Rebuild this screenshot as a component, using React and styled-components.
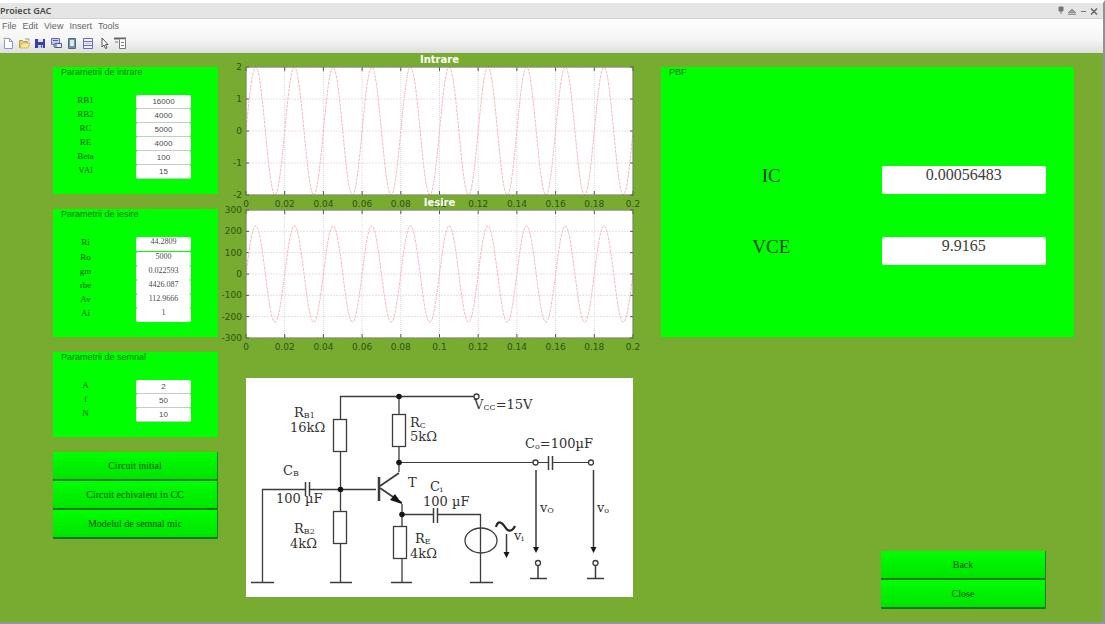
import React, { useId, useState } from "react";
import styled, { createGlobalStyle } from "styled-components";

const SANS = '"Liberation Sans", Arial, sans-serif';
const SERIF = '"Liberation Serif", "Times New Roman", serif';
const DEJAVU = '"DejaVu Sans", Verdana, sans-serif';

const GlobalStyle = createGlobalStyle`
  *, *::before, *::after { box-sizing: border-box; }
  body { margin: 0; background: #ffffff; font-family: ${SANS}; }
  h1, h2, figure { margin: 0; }
`;

/* ---------- window frame ---------- */

const Window = styled.div`
  display: flex;
  flex-direction: column;
  min-height: 100vh;
  border-top: 3px solid #ffffff;
  border-right: 2px solid #90929a;
  border-bottom: 2px solid #94989a;
  background: #77ac30;
`;

const TitleBar = styled.header`
  display: flex;
  align-items: center;
  justify-content: space-between;
  height: 16px;
  padding-right: 4px;
  background: #e5e5e5;
  border-bottom: 1px solid #d2d2d2;
`;

const WindowTitle = styled.h1`
  font: 600 9px/14px "Noto Sans", sans-serif;
  color: #4a4a4a;
`;

const WindowControls = styled.div`
  display: flex;
  align-items: center;
  gap: 1px;
`;

const PlainButton = styled.button`
  display: flex;
  padding: 0;
  border: 0;
  background: none;
  color: #6a6a6a;
`;

const Chrome = styled.div`
  background: linear-gradient(#fdfdfd, #f5f5f5 60%, #dedede);
  height: 34px;
`;

const MenuBar = styled.nav`
  display: flex;
  gap: 6px;
  padding: 0 2px;
  height: 15px;
`;

const MenuItem = styled(PlainButton)`
  font: 9px/14px ${SANS};
  color: #666666;
`;

const Toolbar = styled.div`
  display: flex;
  align-items: center;
  gap: 4px;
  height: 18px;
  padding: 0 2px;
`;

/* ---------- content ---------- */

const Workspace = styled.main`
  flex: 1;
  display: grid;
  grid-template-columns: 165px 387fr 413fr;
  column-gap: 28px;
  padding: 0 29px 13px 53px;
`;

const Column = styled.div`
  display: flex;
  flex-direction: column;
  gap: 15px;
  padding-top: 14px;
`;

const PlotColumn = styled.div`
  display: flex;
  flex-direction: column;
  gap: 1px;
`;

const Panel = styled.section`
  background: #00ff00;
  padding-bottom: ${(p) => (p.$large ? "72px" : "15px")};
`;

const PanelTitle = styled.h2`
  padding-left: 8px;
  margin-bottom: ${(p) => (p.$large ? "89px" : "18px")};
  font: 9px/10px ${SANS};
  color: #0b780b;
`;

const FieldRows = styled.div`
  display: grid;
  grid-template-columns: 1fr 1fr;
  column-gap: 23px;
  padding: 0 27px 0 5px;
`;

const FieldLabel = styled.label`
  height: 14px;
  font: 9px/10px ${SERIF};
  text-align: center;
  color: #045c04;
`;

const FieldInput = styled.input`
  width: 100%;
  min-width: 0;
  height: 14px;
  padding: 0;
  border: 0;
  border-bottom: 1px solid #c4ccc4;
  border-radius: 2px;
  background: #ffffff;
  font: 8px/13px ${SANS};
  text-align: center;
  color: #4c4c4c;
`;

const FieldOutput = styled.output`
  height: 14px;
  border-radius: 2px;
  background: #ffffff;
  font: 8px/10px ${SERIF};
  text-align: center;
  color: #4c4c4c;

  &:first-of-type {
    height: 15px;
    border-bottom: 1px solid #00ff00;
  }
`;

const ResultRows = styled.div`
  display: grid;
  grid-template-columns: 1fr 1fr;
  gap: 43px 28px;
  padding: 0 28px;
`;

const ResultLabel = styled.label`
  font: 19px/19px ${SERIF};
  text-align: center;
  color: #064806;
`;

const ResultOutput = styled.output`
  height: 28px;
  border-radius: 2px;
  background: #ffffff;
  font: 16px/18px ${SERIF};
  text-align: center;
  color: #3c3c3c;
`;

const ButtonStack = styled.div`
  display: flex;
  flex-direction: column;
  margin: ${(p) => (p.$right ? "auto 28px 0 auto" : "0")};
  width: 165px;
`;

const PushButton = styled.button`
  height: 29px;
  padding: 0;
  border: 0;
  border-right: 1px solid #0b8a0b;
  border-bottom: 2px solid #0b7a0b;
  border-radius: 1px;
  background: linear-gradient(#00ff00, #00e400);
  font: 10px/14px ${SERIF};
  color: #045004;
`;

/* ---------- plots ---------- */

const Figure = styled.figure`
  display: flex;
  flex-direction: column;
`;

const PlotTitle = styled.figcaption`
  position: relative;
  z-index: 1;
  text-align: center;
  font: bold 10px/14px ${DEJAVU};
  color: #ffffff;
`;

const PlotSvg = styled.svg`
  display: block;
  width: 100%;
  height: auto;
  overflow: visible;
  font: 9px ${DEJAVU};
`;

const Schematic = styled.svg`
  display: block;
  width: 100%;
  height: auto;
  margin-top: 39px;
  background: #ffffff;
  font: 13px "DejaVu Serif", serif;
`;

const W = 387;
const H = 128;
const X_TICKS = ["0", "0.02", "0.04", "0.06", "0.08", "0.1", "0.12", "0.14", "0.16", "0.18", "0.2"];

function sinePath(amplitude, limit) {
  const points = [];
  for (let x = 0; x <= W; x += 1) {
    const y = H / 2 - (amplitude / limit) * (H / 2) * Math.sin((2 * Math.PI * 10 * x) / W);
    points.push(`${x} ${y.toFixed(2)}`);
  }
  return "M" + points.join("L");
}

function Plot({ title, yTicks, amplitude, limit }) {
  return (
    <Figure>
      <PlotTitle>{title}</PlotTitle>
      <PlotSvg viewBox={`0 0 ${W} ${H}`} role="img" aria-label={title}>
        <rect width={W} height={H} fill="#fff" />
        {X_TICKS.map((t, i) => {
          const x = (W * i) / 10;
          return (
            <g key={t}>
              <path d={`M${x} 0V${H}`} stroke="#dcd2e0" strokeDasharray="1 1" />
              <path d={`M${x} 0v4M${x} ${H}v-4`} stroke="#555" />
              <text x={x} y={H + 12} textAnchor="middle" fill="#2f5210">{t}</text>
            </g>
          );
        })}
        {yTicks.map((t, i) => {
          const y = (H * i) / (yTicks.length - 1);
          return (
            <g key={t}>
              <path d={`M0 ${y}H${W}`} stroke="#ecdce2" strokeDasharray="2 1" />
              <path d={`M0 ${y}h3M${W} ${y}h-3`} stroke="#555" />
              <text x={-4} y={y + 3} textAnchor="end" fill="#2f5210">{t}</text>
            </g>
          );
        })}
        <path d={sinePath(amplitude, limit)} fill="none" stroke="#f6b8c0" strokeDasharray="3 1" />
        <rect width={W} height={H} fill="none" stroke="#5d7a3c" />
      </PlotSvg>
    </Figure>
  );
}

/* ---------- circuit drawing ---------- */

function Sub({ x, y, base, sub, rest = "" }) {
  return (
    <text x={x} y={y}>
      {base}
      <tspan fontSize="8" dy="1">{sub}</tspan>
      {rest && <tspan dy="-1">{rest}</tspan>}
    </text>
  );
}

function Circuit() {
  return (
    <Schematic viewBox="0 0 387 219" role="img" aria-label="Schema circuitului">
      <g fill="none" stroke="#3c3c3c" strokeWidth="1.3">
        <path d="M94.5 41V18.5H228" />
        <path d="M94.5 74V133M94.5 166V204M153 18.5V36M153 68V94" />
        <path d="M16.5 204V111.500H59M64 111.500H130" />
        <path d="M153 84.500H287M292 84.500H302M306 84.500H342" strokeWidth="1" />
        <path d="M156 126V148M156 180V204M156 136.500H187M192 136.500H234.500V204" />
        <path d="M5 204.500H28M84 204.500H106M145 204.500H166M224 204.500H247M284 200.500H301M341 200.500H358" />
        <rect x="87.500" y="41.500" width="13" height="32" />
        <rect x="87.500" y="133.500" width="13" height="32" />
        <rect x="146.500" y="36.500" width="13" height="32" />
        <rect x="147.500" y="148.500" width="13" height="32" />
        <path d="M59.500 104V118M63.500 104V118M187.500 130V145M191.500 130V145M302.500 78V92M306.500 78V92" strokeWidth="1.500" />
        <path d="M133 99V123" strokeWidth="2.500" />
        <path d="M134 108L153 95M134 110L156 125" strokeWidth="1.800" />
        <ellipse cx="235" cy="162.500" rx="16" ry="12.500" />
        <path d="M250 149C252 142 256 144 259 149S266 154 269 148" strokeWidth="2.200" stroke="#222" />
        <path d="M260.500 156V176M290 92V170M347.500 92V170M292 188V200M349.500 188V200" strokeWidth="1.500" />
        <circle cx="230.500" cy="18.500" r="2.500" />
        <circle cx="289.500" cy="84.500" r="2.500" />
        <circle cx="345" cy="84.500" r="2.500" />
        <circle cx="292" cy="185" r="2.500" />
        <circle cx="349.500" cy="185" r="2.500" />
      </g>
      <g fill="#161616">
        <circle cx="153" cy="18.500" r="2.800" />
        <circle cx="94.500" cy="111.500" r="2.800" />
        <circle cx="153" cy="84.500" r="2.800" />
        <circle cx="156" cy="136.500" r="2.800" />
        <path d="M156 126L144 122L149 116Z" />
        <path d="M257.500 174h6l-3 6zM287 169h6l-3 6zM344.500 169h6l-3 6z" />
      </g>
      <g fill="#333">
        <Sub x="48" y="39" base="R" sub="B1" />
        <text x="44" y="54">16kΩ</text>
        <Sub x="164" y="49" base="R" sub="C" />
        <text x="164" y="63">5kΩ</text>
        <Sub x="228" y="31" base="V" sub="CC" rest="=15V" />
        <Sub x="279" y="70" base="C" sub="o" rest="=100µF" />
        <Sub x="37" y="97" base="C" sub="B" />
        <text x="30" y="125">100 µF</text>
        <text x="162" y="109">T</text>
        <Sub x="184" y="113" base="C" sub="i" />
        <text x="177" y="128">100 µF</text>
        <Sub x="48" y="155" base="R" sub="B2" />
        <text x="44" y="170">4kΩ</text>
        <Sub x="169" y="165" base="R" sub="E" />
        <text x="164" y="180">4kΩ</text>
        <Sub x="268" y="162" base="v" sub="i" />
        <Sub x="294" y="134" base="v" sub="O" />
        <Sub x="351" y="134" base="v" sub="o" />
      </g>
    </Schematic>
  );
}

/* ---------- icons ---------- */

const TOOL_ICONS = [
  ["New", <><path d="M2.500 1.500h5l3 3v7h-8z" fill="#fff" stroke="#8c94cc" /><path d="M7.500 1.500v3h3" fill="none" stroke="#8c94cc" /><path d="M1 1l2 2M3 0v2" stroke="#e0c050" /></>],
  ["Open", <><path d="M1.500 10.500v-7h3l1 1h4v6z" fill="#e8d070" stroke="#b89c40" /><path d="M2 11l2-5h8l-2 5z" fill="#f6e89a" stroke="#c0a850" strokeWidth=".7" /><path d="M7 2h4v2" fill="none" stroke="#999" /></>],
  ["Save", <><path d="M1 2h10v9H1z" fill="#3840a0" /><path d="M4 2h5v3H4z" fill="#dfe3fa" /><path d="M4 8h5v3H4z" fill="#c6ccee" /><path d="M7 8.500h1v2H7z" fill="#3840a0" /></>],
  ["Print", <><path d="M1.500 1.500h8v6h-8z" fill="#c4cce8" stroke="#6870a8" /><path d="M3 3.500h5" stroke="#5860a0" /><path d="M4.500 6.500h7v4h-7z" fill="#e8ebf6" stroke="#4c5488" /><circle cx="5" cy="8.500" r="2" fill="#8290c0" /></>],
  ["Device", <><path d="M2.500 1.500h7v10h-7z" fill="#7890a4" stroke="#52687c" /><path d="M4 3h4v6H4z" fill="#d4ecec" /></>],
  ["Properties", <><path d="M1.500 1.500h9v10h-9z" fill="#f2f2ff" stroke="#6c6cb4" /><path d="M2 4.500h8M2 8.500h8" stroke="#6c6cb4" /><path d="M3 6.500h6" stroke="#b8b8dc" /></>],
  ["Select", <path d="M4 1v9l2-2 1.500 3.500 1.500-.6L7.500 7.500H10z" fill="#fff" stroke="#555" />],
  ["Inspector", <><path d="M0 1.500h12" stroke="#666" strokeWidth="2" /><path d="M5.500 2.500v9h6v-9" fill="#fff" stroke="#777" /><path d="M7 5.500h3M7 8.500h3M1 5h3" stroke="#777" /></>],
];

const CONTROL_ICONS = [
  ["Pin", <path d="M3 1h4v4H3zM5 5v3" fill="#777" stroke="#777" />],
  ["Roll up", <path d="M1 7L5 3l4 4zM1 8.500h8" fill="#999" stroke="#999" />],
  ["Minimize", <path d="M3 5.500h5" stroke="#777" />],
  ["Close window", <path d="M2 2.500l6 6M8 2.500l-6 6" stroke="#666" strokeWidth="1.500" />],
];

/* ---------- form parts ---------- */

function InputField({ label, initial }) {
  const id = useId();
  const [value, setValue] = useState(initial);
  return (
    <>
      <FieldLabel htmlFor={id}>{label}</FieldLabel>
      <FieldInput id={id} value={value} onChange={(e) => setValue(e.target.value)} />
    </>
  );
}

function OutputField({ label, value }) {
  const id = useId();
  return (
    <>
      <FieldLabel htmlFor={id}>{label}</FieldLabel>
      <FieldOutput id={id}>{value}</FieldOutput>
    </>
  );
}

function ResultField({ label, value }) {
  const id = useId();
  return (
    <>
      <ResultLabel htmlFor={id}>{label}</ResultLabel>
      <ResultOutput id={id}>{value}</ResultOutput>
    </>
  );
}

const INPUTS = [["RB1", "16000"], ["RB2", "4000"], ["RC", "5000"], ["RE", "4000"], ["Beta", "100"], ["VAl", "15"]];
const OUTPUTS = [["Ri", "44.2809"], ["Ro", "5000"], ["gm", "0.022593"], ["rbe", "4426.087"], ["Av", "112.9666"], ["Ai", "1"]];
const SIGNAL = [["A", "2"], ["f", "50"], ["N", "10"]];

export default function App() {
  return (
    <>
      <GlobalStyle />
      <Window>
        <TitleBar>
          <WindowTitle>Proiect GAC</WindowTitle>
          <WindowControls>
            {CONTROL_ICONS.map(([name, art]) => (
              <PlainButton key={name} aria-label={name}>
                <svg width="10" height="10" viewBox="0 0 10 10">{art}</svg>
              </PlainButton>
            ))}
          </WindowControls>
        </TitleBar>
        <Chrome>
          <MenuBar>
            {["File", "Edit", "View", "Insert", "Tools"].map((m) => (
              <MenuItem key={m}>{m}</MenuItem>
            ))}
          </MenuBar>
          <Toolbar>
            {TOOL_ICONS.map(([name, art]) => (
              <PlainButton key={name} aria-label={name}>
                <svg width="12" height="12" viewBox="0 0 12 12">{art}</svg>
              </PlainButton>
            ))}
          </Toolbar>
        </Chrome>

        <Workspace>
          <Column>
            <Panel>
              <PanelTitle>Parametrii de intrare</PanelTitle>
              <FieldRows>
                {INPUTS.map(([l, v]) => <InputField key={l} label={l} initial={v} />)}
              </FieldRows>
            </Panel>
            <Panel>
              <PanelTitle>Parametrii de iesire</PanelTitle>
              <FieldRows>
                {OUTPUTS.map(([l, v]) => <OutputField key={l} label={l} value={v} />)}
              </FieldRows>
            </Panel>
            <Panel>
              <PanelTitle>Parametrii de semnal</PanelTitle>
              <FieldRows>
                {SIGNAL.map(([l, v]) => <InputField key={l} label={l} initial={v} />)}
              </FieldRows>
            </Panel>
            <ButtonStack>
              <PushButton>Circuit initial</PushButton>
              <PushButton>Circuit echivalent in CC</PushButton>
              <PushButton>Modelul de semnal mic</PushButton>
            </ButtonStack>
          </Column>

          <PlotColumn>
            <Plot title="Intrare" yTicks={["2", "1", "0", "-1", "-2"]} amplitude={2} limit={2} />
            <Plot title="Iesire" yTicks={["300", "200", "100", "0", "-100", "-200", "-300"]} amplitude={226} limit={300} />
            <Circuit />
          </PlotColumn>

          <Column>
            <Panel $large>
              <PanelTitle $large>PBF</PanelTitle>
              <ResultRows>
                <ResultField label="IC" value="0.00056483" />
                <ResultField label="VCE" value="9.9165" />
              </ResultRows>
            </Panel>
            <ButtonStack $right>
              <PushButton>Back</PushButton>
              <PushButton>Close</PushButton>
            </ButtonStack>
          </Column>
        </Workspace>
      </Window>
    </>
  );
}
